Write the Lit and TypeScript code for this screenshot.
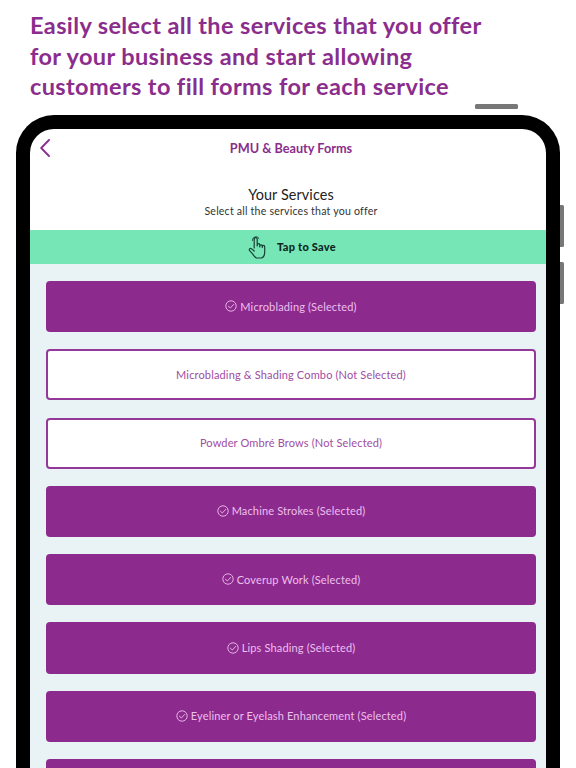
import { LitElement, html, css, svg } from "lit";
import { customElement } from "lit/decorators.js";

const services: [string, boolean][] = [
  ["Microblading", true],
  ["Microblading & Shading Combo", false],
  ["Powder Ombré Brows", false],
  ["Machine Strokes", true],
  ["Coverup Work", true],
  ["Lips Shading", true],
  ["Eyeliner or Eyelash Enhancement", true],
];

const check = svg`<circle cx="6" cy="6" r="5.2" fill="none" stroke="currentColor" stroke-width="0.9"/><path d="M3.4 6.2 L5.3 8 L8.7 4.4" fill="none" stroke="currentColor" stroke-width="0.9" stroke-linecap="round" stroke-linejoin="round"/>`;

@customElement("app-root")
export class AppRoot extends LitElement {
  static styles = css`
    :host {
      display: block;
      width: 576px;
      height: 768px;
      overflow: hidden;
      background: #fff;
      font-family: Lato, "Open Sans", sans-serif;
    }
    .headline {
      margin: 0;
      padding: 10px 0 0 30px;
      height: 90px;
      font-size: 23.5px;
      line-height: 30.5px;
      font-weight: 700;
      letter-spacing: 0.38px;
      color: #8a2d8c;
    }
    .top-key-row {
      display: flex;
      justify-content: flex-end;
      padding: 4px 58px 0 0;
      height: 11px;
    }
    .top-key {
      width: 43px;
      height: 5px;
      border-radius: 1.5px;
      background: #777;
    }
    .device-row {
      display: flex;
      align-items: flex-start;
      padding-left: 16px;
    }
    .device {
      width: 544px;
      height: 700px;
      box-sizing: border-box;
      border: 14px solid #000;
      border-bottom: 0;
      border-radius: 38px 38px 0 0;
      background: #fff;
      overflow: hidden;
      flex: none;
    }
    .side-keys {
      display: flex;
      flex-direction: column;
      gap: 15px;
      padding-top: 90px;
    }
    .side-key {
      width: 3.5px;
      height: 42px;
      border-radius: 0 1.5px 1.5px 0;
      background: #777;
    }
    .nav {
      display: grid;
      grid-template-columns: 30px 1fr 24px;
      align-items: center;
      height: 38px;
    }
    .back {
      display: block;
      margin-left: 10px;
      color: #8a2d8c;
    }
    .nav-title {
      text-align: center;
      font-size: 12.7px;
      font-weight: 700;
      color: #8a2d8c;
    }
    .intro {
      text-align: center;
      color: #222;
      padding: 19px 0 0 6px;
      height: 44px;
    }
    .intro-title {
      font-size: 14.4px;
      line-height: 17px;
      letter-spacing: 0.1px;
    }
    .intro-sub {
      font-size: 10.6px;
      line-height: 17px;
      letter-spacing: 0.2px;
      color: #333;
    }
    .save {
      display: flex;
      align-items: center;
      justify-content: center;
      gap: 11px;
      height: 34px;
      background: #77e6b7;
      font-size: 11px;
      font-weight: 900;
      letter-spacing: 0.25px;
      color: #10281f;
      padding-left: 8px;
    }
    .save span {
      position: relative;
      top: -1px;
    }
    .hand {
      display: block;
    }
    .list {
      display: flex;
      flex-direction: column;
      gap: 17.1px;
      padding: 17px 10px 0 16px;
      background: #e9f2f4;
      height: 500px;
    }
    .item {
      flex: none;
      height: 51.2px;
      box-sizing: border-box;
      border-radius: 4px;
      display: flex;
      align-items: center;
      justify-content: center;
      gap: 3px;
      padding-bottom: 1px;
      font-size: 11px;
      letter-spacing: 0.15px;
    }
    .on {
      background: #8c2b8d;
      color: #eebfed;
    }
    .off {
      background: #fff;
      border: 2px solid #94399a;
      color: #a04da3;
    }
    .check {
      display: block;
      flex: none;
    }
  `;

  render() {
    return html`
      <h1 class="headline">
        Easily select all the services that you offer<br />
        for your business and start allowing<br />
        customers to fill forms for each service
      </h1>
      <div class="top-key-row"><div class="top-key"></div></div>
      <div class="device-row">
        <div class="device">
          <div class="nav">
            <svg class="back" width="10" height="18" viewBox="0 0 10 18">
              <path d="M9 1 L1.2 9 L9 17" fill="none" stroke="currentColor" stroke-width="1.8" stroke-linecap="round" stroke-linejoin="round" />
            </svg>
            <div class="nav-title">PMU &amp; Beauty Forms</div>
            <div></div>
          </div>
          <div class="intro">
            <div class="intro-title">Your Services</div>
            <div class="intro-sub">Select all the services that you offer</div>
          </div>
          <div class="save">
            <svg class="hand" width="18" height="24" viewBox="0 0 18 24">
              <path d="M6.2 13 V4.2 a1.5 1.5 0 0 1 3 0 V11 M9.2 10 a1.3 1.3 0 0 1 2.6 0 V12 M11.8 10.8 a1.3 1.3 0 0 1 2.5 0 V12.4 M14.3 11.6 a1.2 1.2 0 0 1 2.4 0 V17 c0 3 -1.4 5.4 -3.2 6 H8.4 c-1.5 -.6 -2.6 -2.4 -4 -4.3 L1.6 15.6 c-1 -1.4 .8 -2.9 2.1 -1.7 L6.2 16" fill="none" stroke="#174034" stroke-width="1.2" stroke-linecap="round" stroke-linejoin="round" />
              <path d="M4.4 5.4 a3.6 3.6 0 0 1 6.6 -2" fill="none" stroke="#174034" stroke-width="1" stroke-linecap="round" />
            </svg>
            <span>Tap to Save</span>
          </div>
          <div class="list">
            ${services.map(
              ([name, on]) => html`
                <div class="item ${on ? "on" : "off"}">
                  ${on ? html`<svg class="check" width="12" height="12" viewBox="0 0 12 12">${check}</svg>` : ""}
                  <span>${name} (${on ? "Selected" : "Not Selected"})</span>
                </div>
              `
            )}
            <div class="item on"></div>
          </div>
        </div>
        <div class="side-keys">
          <div class="side-key"></div>
          <div class="side-key"></div>
        </div>
      </div>
    `;
  }
}
